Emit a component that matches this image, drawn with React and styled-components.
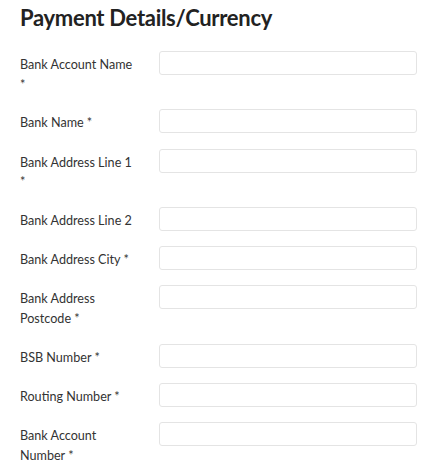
import React from "react";
import styled, { createGlobalStyle } from "styled-components";

const Global = createGlobalStyle`
  html, body { margin: 0; padding: 0; background: #fff; }
  body { font-family: Lato, "Noto Sans", sans-serif; }
  * { box-sizing: border-box; }
`;

const Page = styled.div`
  width: 444px;
  min-height: 474px;
  padding: 5px 20px 0 20px;
`;

const Title = styled.h2`
  margin: 0 0 20px 0;
  font-size: 22px;
  line-height: 26px;
  font-weight: 700;
  color: #222;
  letter-spacing: -0.3px;
`;

const Form = styled.form`
  display: flex;
  flex-direction: column;
  gap: 15.3px;
`;

const Row = styled.div`
  display: grid;
  grid-template-columns: 119px 258px;
  column-gap: 20px;
  align-items: start;
`;

const Label = styled.label`
  padding-top: 4px;
  font-size: 12.6px;
  line-height: 19.5px;
  color: #333;
`;

const Input = styled.input`
  display: block;
  width: 258px;
  height: 24px;
  margin: 0;
  border: 1px solid #e4e4e4;
  border-radius: 3px;
  background: #fff;
  outline: none;
  font: inherit;
`;

const fields = [
  "Bank Account Name *",
  "Bank Name *",
  "Bank Address Line 1 *",
  "Bank Address Line 2",
  "Bank Address City *",
  "Bank Address Postcode *",
  "BSB Number *",
  "Routing Number *",
  "Bank Account Number *",
];

export default function App() {
  return (
    <Page>
      <Global />
      <Title>Payment Details/Currency</Title>
      <Form>
        {fields.map((f, i) => (
          <Row key={i}>
            <Label htmlFor={`f${i}`}>{f}</Label>
            <Input id={`f${i}`} type="text" />
          </Row>
        ))}
      </Form>
    </Page>
  );
}
